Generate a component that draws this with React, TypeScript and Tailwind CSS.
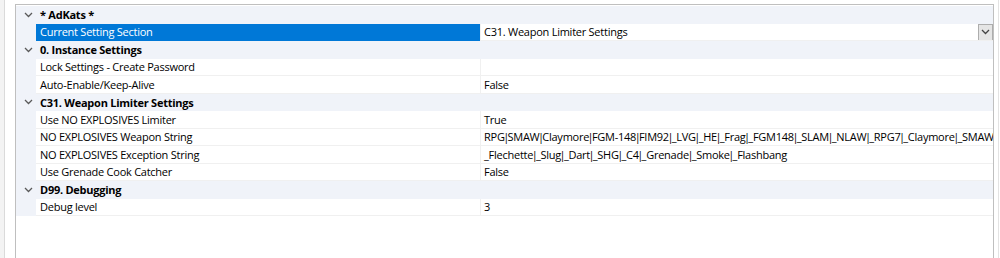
import React from "react"

type Row =
  | { kind: "cat"; label: string }
  | { kind: "prop"; label: string; value: string; selected?: boolean; dropdown?: boolean }

const rows: Row[] = [
  { kind: "cat", label: "* AdKats *" },
  { kind: "prop", label: "Current Setting Section", value: "C31. Weapon Limiter Settings", selected: true, dropdown: true },
  { kind: "cat", label: "0. Instance Settings" },
  { kind: "prop", label: "Lock Settings - Create Password", value: "" },
  { kind: "prop", label: "Auto-Enable/Keep-Alive", value: "False" },
  { kind: "cat", label: "C31. Weapon Limiter Settings" },
  { kind: "prop", label: "Use NO EXPLOSIVES Limiter", value: "True" },
  {
    kind: "prop",
    label: "NO EXPLOSIVES Weapon String",
    value: "RPG|SMAW|Claymore|FGM-148|FIM92|_LVG|_HE|_Frag|_FGM148|_SLAM|_NLAW|_RPG7|_Claymore|_SMAW",
  },
  {
    kind: "prop",
    label: "NO EXPLOSIVES Exception String",
    value: "_Flechette|_Slug|_Dart|_SHG|_C4|_Grenade|_Smoke|_Flashbang",
  },
  { kind: "prop", label: "Use Grenade Cook Catcher", value: "False" },
  { kind: "cat", label: "D99. Debugging" },
  { kind: "prop", label: "Debug level", value: "3" },
]

const Chevron = ({ className = "" }: { className?: string }) => (
  <svg width="9" height="6" viewBox="0 0 9 6" className={className}>
    <path d="M1 1 L4.5 4.5 L8 1" fill="none" stroke="currentColor" strokeWidth="1.3" />
  </svg>
)

// pipes are much narrower in the original font
const Value = ({ text }: { text: string }) => (
  <span className="leading-none whitespace-nowrap">
    {text.split("|").map((part, i) => (
      <React.Fragment key={i}>
        {i > 0 && <span className="mx-[-1.5px]">|</span>}
        {part}
      </React.Fragment>
    ))}
  </span>
)

export default function App() {
  return (
    <div
      className="flex w-[1000px] h-[258px] bg-white overflow-hidden text-[11px] tracking-[-0.25px] text-black"
      style={{ fontFamily: '"Open Sans", "Noto Sans", sans-serif' }}
    >
      {/* left edge of the dialog */}
      <div className="w-[4px] h-full bg-[#f3f3f3]" />
      <div className="w-[11px] h-full bg-white border-l border-[#dadada]" />

      {/* property grid */}
      <div className="mt-[4px] w-[979px] h-[254px] border-l border-t border-r border-[#bfbfbf] pt-px flex flex-col">
        {rows.map((row, i) =>
          row.kind === "cat" ? (
            <div key={i} className="flex items-center h-[17.5px] bg-[#f0f3f9] shrink-0">
              <div className="w-[20px] flex justify-center pl-[5px] text-[#5a5a5a]">
                <Chevron />
              </div>
              <span className="pl-[4px] font-bold leading-none">{row.label}</span>
            </div>
          ) : (
            <div key={i} className="flex h-[17.5px] shrink-0">
              <div className="w-[20px] bg-[#f0f3f9]" />
              <div
                className={`w-[444px] flex items-center pl-[4px] border-b ${
                  row.selected ? "bg-[#0078d7] text-white border-[#0078d7]" : "border-[#f0f0f0]"
                }`}
              >
                <span className="leading-none whitespace-nowrap">{row.label}</span>
              </div>
              <div className="w-px bg-[#f0f0f0]" />
              <div className="flex-1 min-w-0 flex items-center pl-[3px] border-b border-[#f0f0f0] overflow-hidden relative">
                <Value text={row.value} />
                {row.dropdown && (
                  <div className="absolute right-0 top-0 w-[15px] h-[17px] bg-[#e5e5e5] border border-[#adadad] flex items-center justify-center text-[#444]">
                    <Chevron />
                  </div>
                )}
              </div>
            </div>
          )
        )}
        <div className="flex-1 bg-white" />
      </div>

      {/* right edge */}
      <div className="w-[4px] h-full bg-white" />
      <div className="w-px h-full bg-[#e3e3e3]" />
      <div className="flex-1 h-full bg-white" />
    </div>
  )
}
